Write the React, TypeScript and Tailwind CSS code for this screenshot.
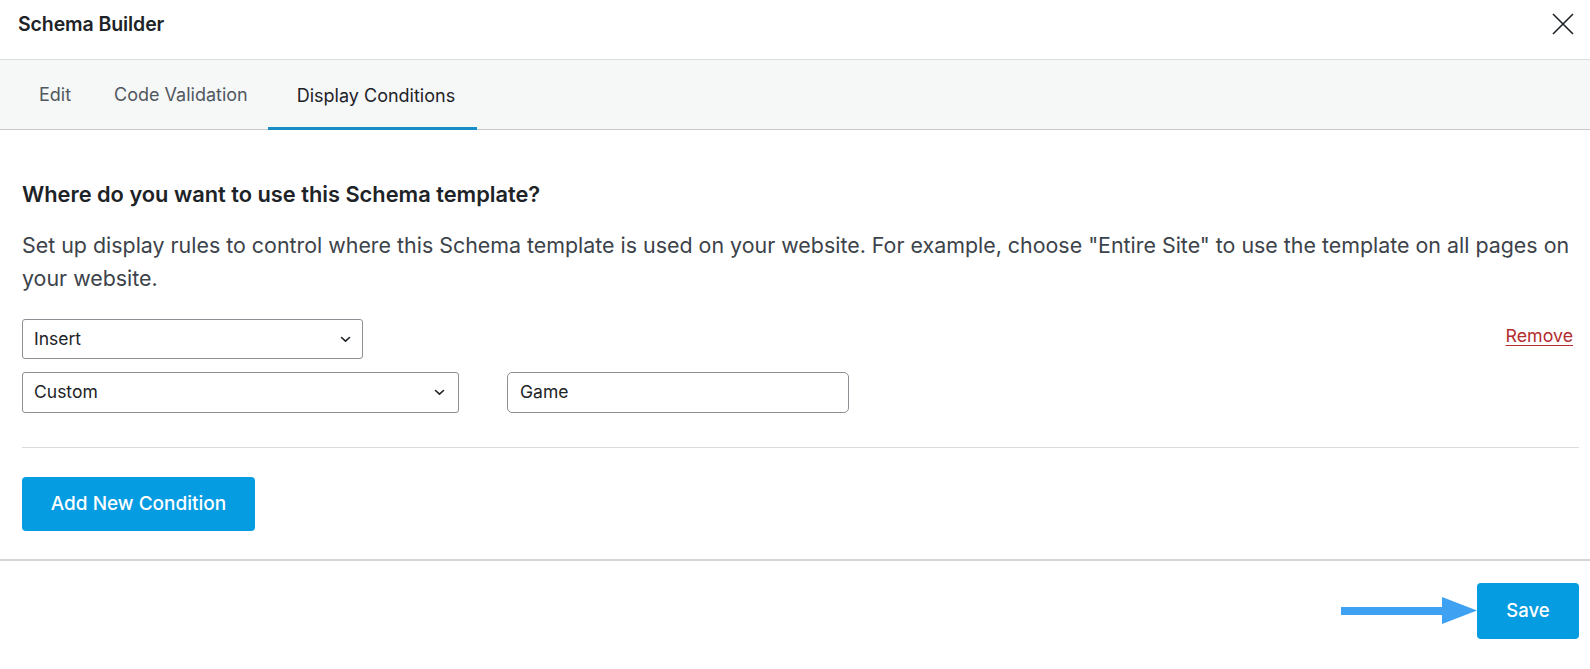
import React from "react";

const Chevron = () => (
  <svg width="11" height="7" viewBox="0 0 11 7" fill="none">
    <path d="M1.5 1.5 L5.5 5.2 L9.5 1.5" stroke="#1d2327" strokeWidth="1.6" strokeLinecap="round" strokeLinejoin="round" />
  </svg>
);

export default function App() {
  return (
    <div className="w-[1590px] h-[669px] bg-white flex flex-col text-[#1d2327]" style={{ fontFamily: "Inter, 'Noto Sans', sans-serif" }}>
      {/* Header */}
      <div className="h-[60px] flex items-start justify-between pl-[18px] pr-[16px] pt-[11px] border-b border-[#dcdcde]">
        <div className="text-[19.5px] leading-[26px] font-semibold tracking-[-0.1px]">Schema Builder</div>
        <svg width="22" height="22" viewBox="0 0 22 22" className="mt-[2px]">
          <path d="M1 1 L21 21 M21 1 L1 21" stroke="#1d2327" strokeWidth="1.6" />
        </svg>
      </div>

      {/* Tabs */}
      <div className="h-[70px] bg-[#f6f7f7] border-b border-[#c9cacd] flex items-stretch pl-[39px] text-[18px]">
        <div className="flex items-center text-[#50575e]">Edit</div>
        <div className="flex items-center text-[#50575e] ml-[43px]">Code Validation</div>
        <div className="flex items-center justify-start pl-[29px] w-[209px] ml-[20px] text-[#1d2327] border-b-[3px] border-[#1a8dc7] pt-[3px] -mb-[1px]">
          Display Conditions
        </div>
      </div>

      {/* Body */}
      <div className="pl-[22px] pr-[11px] pt-[50px]">
        <h2 className="text-[21.8px] font-semibold leading-[28px] text-[#1d2327]">Where do you want to use this Schema template?</h2>
        <p className="mt-[21px] text-[21.4px] leading-[33px] text-[#3c434a]">
          Set up display rules to control where this Schema template is used on your website. For example, choose "Entire Site" to use the template on all pages on your website.
        </p>

        <div className="mt-[24px] flex items-center justify-between">
          <div className="w-[341px] h-[40px] border border-[#8c8f94] rounded-[3px] flex items-center justify-between pl-[11px] pr-[11px] text-[17.5px]">
            <span>Insert</span>
            <Chevron />
          </div>
          <a className="text-[17.8px] text-[#b32d2e] underline underline-offset-[3px] -mt-[5px] mr-[6px]">Remove</a>
        </div>

        <div className="mt-[13px] flex items-center">
          <div className="w-[437px] h-[41px] border border-[#8c8f94] rounded-[3px] flex items-center justify-between pl-[11px] pr-[13px] text-[17.5px]">
            <span>Custom</span>
            <Chevron />
          </div>
          <div className="ml-[48px] w-[342px] h-[41px] border border-[#8c8f94] rounded-[5px] flex items-center pl-[12px] text-[17.5px]">
            Game
          </div>
        </div>

        <div className="mt-[34px] h-px bg-[#dcdcde]" />

        <button className="mt-[29px] w-[233px] h-[54px] bg-[#069ce2] rounded-[4px] text-white text-[19px] font-medium flex items-center justify-center">
          Add New Condition
        </button>
      </div>

      {/* Footer */}
      <div className="mt-[28px] h-[2px] bg-[#d3d4d6]" />
      <div className="flex justify-end items-center pr-[11px] pt-[22px]">
        <svg width="136" height="28" viewBox="0 0 136 28">
          <rect x="0" y="10" width="104" height="8" fill="#3ea1f2" />
          <polygon points="101,0 136,13.5 101,27" fill="#3ea1f2" />
        </svg>
        <button className="w-[102px] h-[56px] bg-[#069ce2] rounded-[4px] text-white text-[18.5px] font-medium flex items-center justify-center">
          Save
        </button>
      </div>
    </div>
  );
}
